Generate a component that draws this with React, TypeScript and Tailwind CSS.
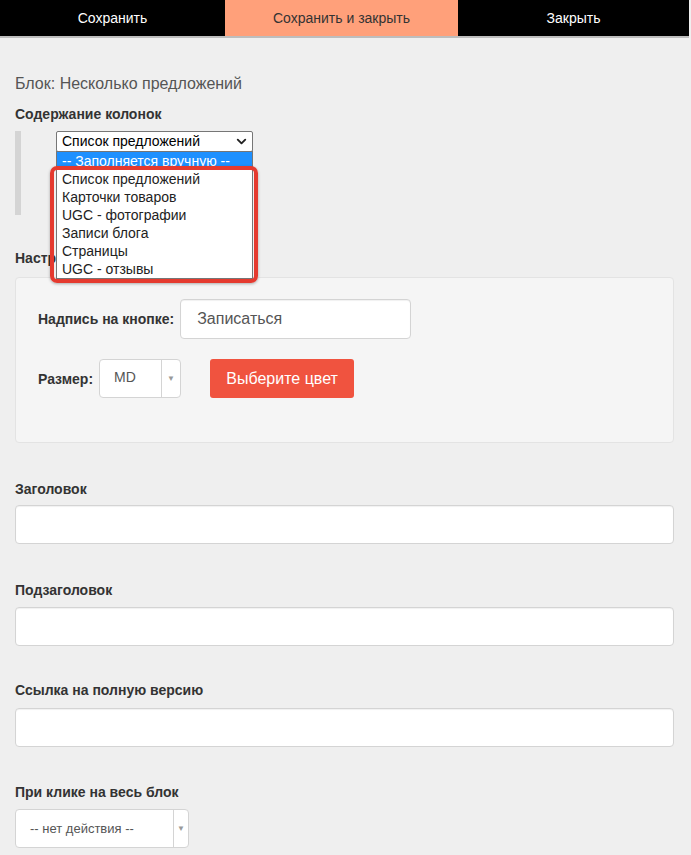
import { ChevronDown } from 'lucide-react';

const options = [
  'Список предложений',
  'Карточки товаров',
  'UGC - фотографии',
  'Записи блога',
  'Страницы',
  'UGC - отзывы',
];

function Label({ children }: { children: React.ReactNode }) {
  return <div className="text-[14px] font-bold leading-5 text-[#333]">{children}</div>;
}

function TextInput({ value, tall }: { value?: string; tall?: boolean }) {
  return (
    <div className={`w-full rounded-[4px] border border-[#d4d4d4] bg-white shadow-[inset_0_1px_1px_rgba(0,0,0,0.06)] px-[16px] flex items-center text-[16px] text-[#555] ${tall ? 'h-[40px]' : 'h-[39px]'}`}>
      {value}
    </div>
  );
}

function SplitSelect({ value, width, textWidth, small }: { value: string; width: string; textWidth: string; small?: boolean }) {
  return (
    <div className={`flex h-[39px] rounded-[4px] border border-[#d4d4d4] bg-white ${width}`}>
      <div className={`flex items-center pl-[14px] text-[#555] ${textWidth} ${small ? 'text-[13px]' : 'text-[14px] pb-[3px]'}`}>{value}</div>
      <div className="flex flex-1 items-center justify-center border-l border-[#d4d4d4] text-[8px] text-[#999]">▼</div>
    </div>
  );
}

export default function App() {
  return (
    <div className="min-h-[855px] w-[691px] bg-[#efefef] font-['Liberation_Sans',Arial,sans-serif]">
      <div className="flex h-[38px] w-[689px] border-b-2 border-[#bdbdbd] text-[14px]">
        <div className="flex w-[225px] items-center justify-center bg-black text-white">Сохранить</div>
        <div className="flex w-[233px] items-center justify-center bg-[#ffa07a] text-[#333]">Сохранить и закрыть</div>
        <div className="flex flex-1 items-center justify-center bg-black text-white">Закрыть</div>
      </div>

      <div className="px-[15px] pr-[17px]">
        <div className="mt-[36px] text-[16px] leading-5 text-[#555]">Блок: Несколько предложений</div>
        <div className="mt-[10px]">
          <Label>Содержание колонок</Label>
        </div>

        <div className="mt-[7px] flex">
          <div className="h-[84px] w-[6px] bg-[#d4d4d4]" />
          <div className="relative ml-[35px]">
            <div className="flex h-[21px] w-[197px] items-center justify-between rounded-[2px] border border-[#767676] bg-white pl-[5px] pr-[3px] text-[14px] text-black">
              <span>Список предложений</span>
              <ChevronDown size={15} strokeWidth={3} className="text-[#222]" />
            </div>
            <div className="absolute left-0 top-[20px] z-10 w-[197px] border border-[#767676] bg-white text-[14px] leading-[18px] text-[#222]">
              <div className="h-[18px] overflow-hidden bg-[#1e90ff] pl-[5px] text-white">-- Заполняется вручную --</div>
              {options.map((o) => (
                <div key={o} className="h-[18px] pl-[5px]">{o}</div>
              ))}
            </div>
            <div className="absolute left-[-6px] top-[35px] z-20 h-[117px] w-[208px] rounded-[7px] border-[4px] border-[#e53a2f] shadow-[0_1px_3px_rgba(0,0,0,0.3)]" />
          </div>
        </div>

        <div className="mt-[33px]">
          <Label>Настройки кнопки</Label>
        </div>

        <div className="mt-[9px] h-[166px] rounded-[4px] border border-[#e3e3e3] bg-[#f5f5f5] pl-[22px] pt-[21px]">
          <div className="flex items-center gap-[6px]">
            <Label>Надпись на кнопке:</Label>
            <div className="w-[231px]">
              <TextInput value="Записаться" tall />
            </div>
          </div>
          <div className="mt-[20px] flex items-center">
            <Label>Размер:</Label>
            <div className="ml-[6px]">
              <SplitSelect value="MD" width="w-[82px]" textWidth="w-[61px]" />
            </div>
            <div className="ml-[29px] flex h-[39px] w-[144px] items-center justify-center rounded-[3px] bg-[#f0533f] text-[16px] text-white">
              Выберите цвет
            </div>
          </div>
        </div>

        <div className="mt-[36px]">
          <Label>Заголовок</Label>
        </div>
        <div className="mt-[6px]">
          <TextInput />
        </div>

        <div className="mt-[36px]">
          <Label>Подзаголовок</Label>
        </div>
        <div className="mt-[7px]">
          <TextInput />
        </div>

        <div className="mt-[34px]">
          <Label>Ссылка на полную версию</Label>
        </div>
        <div className="mt-[8px]">
          <TextInput />
        </div>

        <div className="mt-[35px]">
          <Label>При клике на весь блок</Label>
        </div>
        <div className="mt-[7px]">
          <SplitSelect value="-- нет действия --" width="w-[174px]" textWidth="w-[157px]" small />
        </div>
      </div>
    </div>
  );
}
